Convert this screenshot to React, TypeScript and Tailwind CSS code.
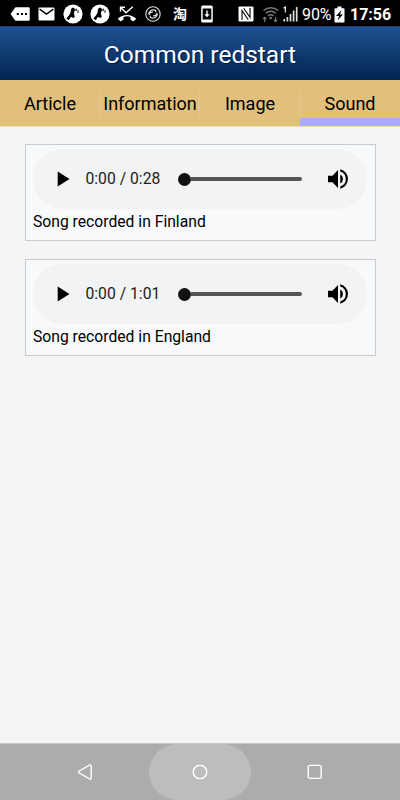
const tabs = [
  { label: 'Article', active: false },
  { label: 'Information', active: false },
  { label: 'Image', active: false },
  { label: 'Sound', active: true },
];

const recordings = [
  { id: 1, duration: '0:28', caption: 'Song recorded in Finland' },
  { id: 2, duration: '1:01', caption: 'Song recorded in England' },
];

const BirdIcon = () => (
  <svg viewBox="0 0 20 20" className="h-5 w-5">
    <circle cx="10" cy="10" r="9.6" fill="#fff" />
    <path
      d="M8.800 4.200c1.300-.8 2.900-.2 3.100 1.200.2 1.600-1 2.600-.9 4.200.1 1.500.9 2.400.6 3.900l-2 .3-1.700-1-2.100 3.500-2.500-1.700c1.700-2 3.900-4.200 4.300-6.300.2-1.200.2-3.400 1.200-4.100z"
      fill="#000"
    />
    <path d="M13.200 4.500v2.500M15 6v3M11.500 6h2.500" stroke="#222" strokeWidth="1" />
  </svg>
);

const StatusBar = () => (
  <div className="flex h-[26px] shrink-0 items-center bg-black pt-[2px] pl-[10px] text-white">
    <svg viewBox="0 0 20 14" className="h-[14px] w-5">
      <path d="M6 .3h13a.7.7 0 0 1 .7.7v12a.7.7 0 0 1-.7.7H6c-.5 0-.8-.2-1-.5L.6 7 5 .8c.2-.3.5-.5 1-.5z" fill="#fff" />
      <path d="M6.8 6h2v2h-2zM11 6h2v2h-2zM15 6h2v2h-2z" fill="#000" />
    </svg>
    <svg viewBox="0 0 17 14" className="ml-2 h-[14px] w-[17px]">
      <rect x=".5" y=".5" width="16" height="13" rx="1" fill="#fff" />
      <path d="M1.6 2.2 8.5 7l6.9-4.8" fill="none" stroke="#000" strokeWidth="1.5" />
    </svg>
    <span className="ml-2">
      <BirdIcon />
    </span>
    <span className="ml-[7px]">
      <BirdIcon />
    </span>
    <svg viewBox="0 0 20 16" className="ml-[7px] h-4 w-5">
      <path d="M3.500 5.500V1.200h4.500M3.800 1.500l5.200 5.300 6.800-6" fill="none" stroke="#fff" strokeWidth="1.4" />
      <path d="M10 9c3.5 0 6.5 1.3 8.8 3.3.3.3.3.6 0 .9l-1.900 1.900c-.3.300-.6.300-.9.100l-2.500-1.700v-2.600a11 11 0 0 0-7 0v2.600L4 15.200c-.3.200-.6.200-.9-.1l-1.900-1.900c-.3-.3-.3-.6 0-.9C3.500 10.300 6.500 9 10 9z" fill="#fff" />
    </svg>
    <svg viewBox="0 0 16 16" className="ml-2 h-4 w-4" fill="none" stroke="#ddd">
      <circle cx="8" cy="8" r="7.2" strokeWidth="1.1" />
      <path
        d="M3.900 8.600a4.200 4.200 0 0 1 6.800-3.800M12.100 7.400a4.200 4.200 0 0 1-6.800 3.800M4 8.800c.8-2 2.500-3 4-2.500M12 7.200c-.8 2-2.500 3-4 2.500M10.200 3.800l.9 2.600M5.800 12.200l-.9-2.600"
        strokeWidth="1.2"
      />
    </svg>
    <span className="mb-[2px] ml-3 w-[15px] font-['Noto_Sans_CJK_SC',sans-serif] text-[14px] leading-5 font-bold">淘</span>
    <svg viewBox="0 0 12 18" className="ml-[13px] h-[18px] w-3">
      <rect x=".2" y=".5" width="11.6" height="17" rx="1.5" fill="#fff" />
      <path d="M1.700 3.500h8.600v11H1.700z" fill="#000" />
      <path d="M5.300 5.500h1.400v3.800h2L6 12.300 3.300 9.300h2z" fill="#fff" />
    </svg>
    <svg viewBox="0 0 16 16" className="ml-[25px] h-4 w-4">
      <rect x=".5" y=".5" width="15" height="15" rx="1" fill="#fff" />
      <path d="M4 14V4.500l6.200 9.300M12 2v9.500L5.800 2.200" fill="none" stroke="#000" strokeWidth="1.1" />
    </svg>
    <svg viewBox="0 0 18 18" className="ml-2 h-[18px] w-[18px]" fill="none" stroke="#777" strokeWidth="1.5">
      <path d="M1.500 5.500a11 11 0 0 1 14.500 0M3.700 8.200a7.500 7.500 0 0 1 10 0M6 10.800a4.500 4.500 0 0 1 5.500 0" />
      <circle cx="8.700" cy="13" r=".6" fill="#777" />
      <path d="M2.700 17v-4.500M1 14.200l1.700-1.900 1.700 1.900M13.500 12v4.500M11.800 14.800l1.700 1.900 1.700-1.900" strokeWidth="1.2" />
    </svg>
    <svg viewBox="0 0 15 16" className="ml-[3px] h-4 w-[15px]">
      <path d="M1.300 15.500V13M4.400 15.500V11M7.500 15.500V8M10.600 15.500V4.500M13.700 15.500V1" stroke="#ddd" strokeWidth="1.7" />
      <path d="M.5 2.300 2.300 1v5.500" fill="none" stroke="#fff" strokeWidth="1.1" />
    </svg>
    <span className="mt-[2px] ml-1 w-[31px] text-[16px] leading-5 tracking-[-0.1px] whitespace-nowrap">90%</span>
    <svg viewBox="0 0 11 17" className="ml-px h-[17px] w-[11px]">
      <path d="M3.500.5h4v1.700h2.300c.5 0 .7.300.7.700v12.900c0 .4-.3.700-.7.700H1.200c-.4 0-.7-.3-.7-.7V2.900c0-.4.3-.7.700-.7h2.300z" fill="#fff" />
      <path d="M7.500 4 2 10h3l-1.500 4.500L9 8.500H6z" fill="#000" />
    </svg>
    <span className="mt-[2px] ml-[5px] text-[16px] leading-5 font-bold whitespace-nowrap">17:56</span>
  </div>
);

type AudioPlayerProps = {
  duration: string;
};

const AudioPlayer = ({ duration }: AudioPlayerProps) => (
  <div className="flex h-[60px] w-[334px] items-center rounded-full bg-[#f1f3f4]">
    <svg viewBox="0 0 13 16" className="ml-6 h-4 w-[13px]">
      <path d="M.7.5v15L12.500 8z" fill="#000" />
    </svg>
    <span className="mb-px ml-[15.5px] w-[76px] text-[15.7px] leading-5 whitespace-nowrap text-[#222]">
      0:00 / {duration}
    </span>
    <div className="ml-4 flex w-[124px] items-center">
      <div className="h-[13px] w-[13px] shrink-0 rounded-full bg-[#111]" />
      <div className="h-1 grow rounded-r-full bg-[#555]" />
    </div>
    <svg viewBox="3 3 18 18" className="ml-[26px] h-5 w-5">
      <path
        d="M3 9v6h4l5 5V4L7 9H3zm13.500 3A4.500 4.500 0 0 0 14 7.970v8.050A4.480 4.480 0 0 0 16.500 12zM14 3.230v2.060a7 7 0 0 1 0 13.420v2.060a9 9 0 0 0 0-17.540z"
        fill="#000"
      />
    </svg>
  </div>
);

const NavigationBar = () => (
  <div className="flex h-[57px] shrink-0 items-center justify-center border-t border-[#c6c6c6] bg-[#acacac]">
    <svg viewBox="0 0 16 18" className="h-[18px] w-4" fill="none" stroke="#fff" strokeWidth="1.4">
      <path d="M12.500 2.100c.8-.4 1.700 0 1.700.9v12c0 .9-.9 1.300-1.700.9L2.200 10c-.8-.5-.8-1.500 0-2z" />
    </svg>
    <div className="mx-14 flex h-14 w-[102px] items-center justify-center rounded-full bg-[#bdbdbd]">
      <svg viewBox="0 0 16 16" className="h-4 w-4">
        <circle cx="8" cy="8" r="6.8" fill="none" stroke="#fff" strokeWidth="1.4" />
      </svg>
    </div>
    <svg viewBox="0 0 16 16" className="h-4 w-4">
      <rect x="1.2" y="1.4" width="13" height="13" rx="2" fill="none" stroke="#fff" strokeWidth="1.4" />
    </svg>
  </div>
);

const App = () => {
  return (
    <div className="flex h-[800px] w-[400px] flex-col overflow-hidden bg-[#f5f5f5] font-[Roboto,sans-serif] text-black">
      <StatusBar />
      <header className="flex h-[54px] shrink-0 items-center justify-center border-t border-[#1b3b66] bg-linear-to-b from-[#205394] to-[#02244f] pt-[2px]">
        <h1 className="text-[24.5px] leading-8 text-white [text-shadow:1px_1px_1px_#001a4d]">Common redstart</h1>
      </header>
      <nav className="grid h-[47px] shrink-0 grid-cols-4 border-b border-[#eedbb8] bg-[#e2bf7b]">
        {tabs.map((tab) => (
          <div
            key={tab.label}
            className={
              tab.active
                ? 'flex flex-col border-b-8 border-[#aaaaff] pt-3'
                : 'flex flex-col border-b-8 border-transparent pt-3'
            }
          >
            <span className="h-6 text-center text-[18px] leading-6 whitespace-nowrap shadow-[-1px_0_0_#e6c891]">
              {tab.label}
            </span>
          </div>
        ))}
      </nav>
      <main className="flex grow flex-col gap-[18px] px-[25px] pt-[17px]">
        {recordings.map((recording) => (
          <div
            key={recording.id}
            className="h-[97px] w-[351px] border border-[#c5cbd0] bg-[#f8f9fb] pt-1 pl-[7px]"
          >
            <AudioPlayer duration={recording.duration} />
            <p className="mt-[3px] text-[15.7px] leading-5">{recording.caption}</p>
          </div>
        ))}
      </main>
      <NavigationBar />
    </div>
  );
};

export default App;
